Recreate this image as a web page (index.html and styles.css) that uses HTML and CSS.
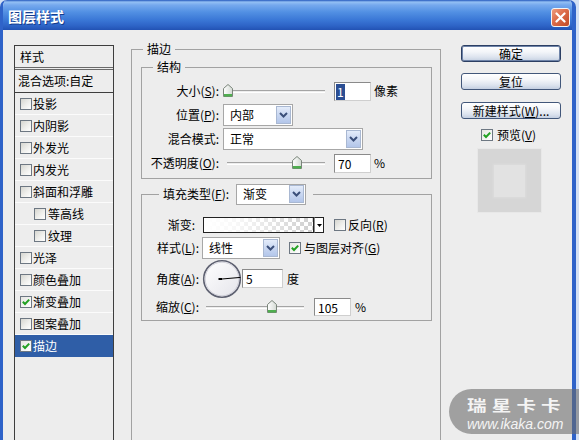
FILE: index.html
```html
<!DOCTYPE html>
<html lang="zh-CN">
<head>
<meta charset="utf-8">
<title>图层样式</title>
<link rel="stylesheet" href="styles.css">
</head>
<body>
<div class="window">
  <div class="titlebar">
    <span class="title">图层样式</span>
    <span class="close"><svg width="11" height="11" viewBox="0 0 11 11"><path d="M1.5 1.5 L9.5 9.5 M9.5 1.5 L1.5 9.5" stroke="#fff" stroke-width="2.2" stroke-linecap="round"/></svg></span>
  </div>
  <div class="client">
    <ul class="stylelist">
      <li class="head">样式</li>
      <li class="blend">混合选项:自定</li>
      <li><span class="cb"></span>投影</li>
      <li><span class="cb"></span>内阴影</li>
      <li><span class="cb"></span>外发光</li>
      <li><span class="cb"></span>内发光</li>
      <li><span class="cb"></span>斜面和浮雕</li>
      <li class="sub"><span class="cb"></span>等高线</li>
      <li class="sub"><span class="cb"></span>纹理</li>
      <li><span class="cb"></span>光泽</li>
      <li><span class="cb"></span>颜色叠加</li>
      <li><span class="cb on"><svg width="10" height="10" viewBox="0 0 10 10"><path d="M1.8 4.8 L4 7 L8.2 2.6" fill="none" stroke="#22a122" stroke-width="2"/></svg></span>渐变叠加</li>
      <li><span class="cb"></span>图案叠加</li>
      <li class="sel"><span class="cb on"><svg width="10" height="10" viewBox="0 0 10 10"><path d="M1.8 4.8 L4 7 L8.2 2.6" fill="none" stroke="#22a122" stroke-width="2"/></svg></span>描边</li>
    </ul>

    <fieldset class="outer">
      <legend>描边</legend>
      <fieldset class="group struct">
        <legend>结构</legend>
        <div class="row first">
          <span class="lbl">大小(<u>S</u>):</span>
          <span class="slider s-size"><span class="thumb" style="left:0px"><svg width="10" height="13" viewBox="0 0 10 13"><defs><linearGradient id="tg1" x1="0" y1="0" x2="1" y2="0"><stop offset="0" stop-color="#ffffff"/><stop offset="1" stop-color="#d4dad4"/></linearGradient></defs><path d="M5 0.5 L9.5 4.5 V12.5 H0.5 V4.5 Z" fill="url(#tg1)" stroke="#7a857a"/><rect x="1" y="10" width="8" height="2.5" fill="#4fae4f"/></svg></span></span>
          <span class="num"><span class="hl">1</span></span>
          <span class="unit">像素</span>
        </div>
        <div class="row">
          <span class="lbl">位置(<u>P</u>):</span>
          <span class="select w-pos">内部<span class="arr"><svg width="9" height="6" viewBox="0 0 9 6"><path d="M1 1 L4.5 4.5 L8 1" fill="none" stroke="#3b4f7a" stroke-width="2"/></svg></span></span>
        </div>
        <div class="row">
          <span class="lbl">混合模式:</span>
          <span class="select w-mode">正常<span class="arr"><svg width="9" height="6" viewBox="0 0 9 6"><path d="M1 1 L4.5 4.5 L8 1" fill="none" stroke="#3b4f7a" stroke-width="2"/></svg></span></span>
        </div>
        <div class="row">
          <span class="lbl">不透明度(<u>O</u>):</span>
          <span class="slider s-op"><span class="thumb" style="left:65px"><svg width="10" height="13" viewBox="0 0 10 13"><defs><linearGradient id="tg2" x1="0" y1="0" x2="1" y2="0"><stop offset="0" stop-color="#ffffff"/><stop offset="1" stop-color="#d4dad4"/></linearGradient></defs><path d="M5 0.5 L9.5 4.5 V12.5 H0.5 V4.5 Z" fill="url(#tg2)" stroke="#7a857a"/><rect x="1" y="10" width="8" height="2.5" fill="#4fae4f"/></svg></span></span>
          <span class="num">70</span>
          <span class="unit">%</span>
        </div>
      </fieldset>

      <fieldset class="group fill">
        <legend><span class="leglbl">填充类型(<u>F</u>):</span><span class="select w-fill">渐变<span class="arr"><svg width="9" height="6" viewBox="0 0 9 6"><path d="M1 1 L4.5 4.5 L8 1" fill="none" stroke="#3b4f7a" stroke-width="2"/></svg></span></span></legend>
        <div class="row r-grad">
          <span class="lbl2 lbl-grad">渐变:</span>
          <span class="gradbox"></span><span class="gradarr"><svg width="5" height="3" viewBox="0 0 5 3"><path d="M0 0 H5 L2.5 3 Z" fill="#000"/></svg></span>
          <span class="cb cb-rev"></span><span class="cbtext">反向(<u>R</u>)</span>
        </div>
        <div class="row r-style">
          <span class="lbl2">样式(<u>L</u>):</span>
          <span class="select w-style">线性<span class="arr"><svg width="9" height="6" viewBox="0 0 9 6"><path d="M1 1 L4.5 4.5 L8 1" fill="none" stroke="#3b4f7a" stroke-width="2"/></svg></span></span>
          <span class="cb on cb-align"><svg width="10" height="10" viewBox="0 0 10 10"><path d="M1.8 4.8 L4 7 L8.2 2.6" fill="none" stroke="#22a122" stroke-width="2"/></svg></span><span class="cbtext">与图层对齐(<u>G</u>)</span>
        </div>
        <div class="row r-angle">
          <span class="lbl2">角度(<u>A</u>):</span>
          <span class="dial"><svg width="40" height="40" viewBox="0 0 40 40"><defs><linearGradient id="dg" x1="0" y1="0" x2="1" y2="1"><stop offset="0" stop-color="#ffffff"/><stop offset="1" stop-color="#e4e4ea"/></linearGradient></defs><circle cx="20" cy="20" r="18.3" fill="url(#dg)" stroke="#5d6070" stroke-width="1.6"/><circle cx="20" cy="20" r="16.8" fill="none" stroke="#c8c8d2" stroke-width="0.8"/><line x1="20" y1="20" x2="38.5" y2="18.4" stroke="#000" stroke-width="1"/><rect x="16.5" y="19" width="3.5" height="2" fill="#000"/></svg></span>
          <span class="num n-angle">5</span>
          <span class="unit u-angle">度</span>
        </div>
        <div class="row r-scale">
          <span class="lbl2">缩放(<u>C</u>):</span>
          <span class="slider s-scale"><span class="thumb" style="left:61px"><svg width="10" height="13" viewBox="0 0 10 13"><defs><linearGradient id="tg3" x1="0" y1="0" x2="1" y2="0"><stop offset="0" stop-color="#ffffff"/><stop offset="1" stop-color="#d4dad4"/></linearGradient></defs><path d="M5 0.5 L9.5 4.5 V12.5 H0.5 V4.5 Z" fill="url(#tg3)" stroke="#7a857a"/><rect x="1" y="10" width="8" height="2.5" fill="#4fae4f"/></svg></span></span>
          <span class="num n-scale">105</span>
          <span class="unit u-scale">%</span>
        </div>
      </fieldset>
    </fieldset>

    <div class="side">
      <div class="btn default">确定</div>
      <div class="btn b-reset">复位</div>
      <div class="btn b-new">新建样式(<u>W</u>)...</div>
      <div class="prevcheck"><span class="cb on"><svg width="10" height="10" viewBox="0 0 10 10"><path d="M1.8 4.8 L4 7 L8.2 2.6" fill="none" stroke="#22a122" stroke-width="2"/></svg></span><span class="cbtext">预览(<u>V</u>)</span></div>
      <div class="preview"><div class="pinner"></div></div>
    </div>
  </div>
</div>
<div class="watermark">
  <span class="wm-cn">瑞星卡卡</span>
  <span class="wm-url">www.ikaka.com</span>
</div>
</body>
</html>
```
FILE: styles.css
```css
html, body {
  margin: 0;
  padding: 0;
}
body {
  width: 579px;
  height: 440px;
  overflow: hidden;
  position: relative;
  background: #d3e0f4;
  font: 12px/14px "Noto Sans CJK SC", "Liberation Sans", sans-serif;
  color: #000;
}
u {
  text-decoration: underline;
  text-underline-offset: 1px;
}
.window {
  width: 576px;
  height: 440px;
  box-sizing: border-box;
  border-left: 3px solid #2f63c9;
  border-right: 4px solid #2f63c9;
  border-radius: 7px 7px 0 0;
  overflow: hidden;
  background: #ededed;
}
.titlebar {
  height: 30px;
  display: flex;
  justify-content: space-between;
  align-items: flex-start;
  background: linear-gradient(to bottom, #2458bd 0, #94c0f4 2px, #76a9ee 5px, #5290e3 12px, #3a77d6 20px, #2d63c6 26px, #2252b4 30px);
}
.title {
  padding: 9px 0 0 5px;
  font-size: 14px;
  line-height: 14px;
  font-weight: bold;
  color: #fff;
  text-shadow: 1px 1px 0 #143c8c;
}
.close {
  margin: 8px 2px 0 0;
  width: 19px;
  height: 19px;
  box-sizing: border-box;
  border: 1px solid #f5f5f5;
  border-radius: 3px;
  background: linear-gradient(135deg, #ee9d80 0%, #dc6b48 45%, #c24a26 100%);
  display: flex;
  align-items: center;
  justify-content: center;
}
.client {
  display: flex;
  align-items: flex-start;
  height: 410px;
  overflow: hidden;
  background: #ededed;
}

/* left style list */
.stylelist {
  list-style: none;
  margin: 15px 0 0 11px;
  padding: 0;
  width: 100px;
  height: 430px;
  box-sizing: border-box;
  border: 1px solid #3e3e3e;
  flex: none;
}
.stylelist li {
  display: flex;
  align-items: center;
  height: 21px;
  border-bottom: 1px solid #fbfbfb;
  padding-left: 5px;
  white-space: nowrap;
}
.stylelist li.head {
  border-bottom: 3px double #6a6a6a;
}
.stylelist li.blend {
  height: 22px;
  padding-left: 3px;
  border-bottom: 1px solid #3e3e3e;
}
.stylelist li.sub {
  padding-left: 19px;
}
.stylelist li.sub .cb {
  margin-right: 2px;
}
.stylelist li.sel {
  background: #2f5ea7;
  color: #fff;
  border-bottom-color: #2f5ea7;
}
.cb {
  width: 12px;
  height: 12px;
  box-sizing: border-box;
  border: 1px solid #6d7782;
  background: linear-gradient(135deg, #d6d6d0 0%, #efefec 55%, #ffffff 100%);
  margin-right: 1px;
  flex: none;
  display: inline-flex;
  align-items: center;
  justify-content: center;
}
.cb.on {
  background: linear-gradient(135deg, #e6e6e2 0%, #ffffff 100%);
}

/* fieldsets */
fieldset {
  margin: 0;
  padding: 0;
  min-width: 0;
  border: 1px solid #a2a2a2;
}
legend {
  padding: 0 4px;
  line-height: 14px;
}
.outer {
  margin: 12px 0 0 17px;
  width: 310px;
  height: 430px;
  box-sizing: border-box;
  flex: none;
}
.outer > legend {
  margin-left: 11px;
}
.group {
  width: 291px;
  box-sizing: border-box;
  margin-left: 9px;
}
.group > legend {
  margin-left: 11px;
}
.struct {
  margin-top: 4px;
  padding: 6px 0 4px 0;
}
.row {
  display: flex;
  align-items: center;
  height: 22px;
  margin-top: 2px;
  white-space: nowrap;
}
.row.first {
  margin-top: 0;
}
.lbl {
  width: 77px;
  text-align: right;
  margin-right: 4px;
  flex: none;
}
.slider {
  position: relative;
  height: 14px;
  flex: none;
}
.slider::before {
  content: "";
  position: absolute;
  left: 0;
  right: 0;
  top: 6px;
  height: 1px;
  border-top: 1px solid #a4a4a4;
  border-bottom: 1px solid #ffffff;
}
.thumb {
  position: absolute;
  top: 0;
  width: 10px;
  height: 13px;
  display: block;
}
.thumb svg {
  display: block;
}
.s-size {
  width: 102px;
  margin-right: 9px;
}
.s-op {
  width: 98px;
  margin-left: 4px;
  margin-right: 9px;
}
.num {
  width: 37px;
  height: 19px;
  box-sizing: border-box;
  border: 1px solid;
  border-color: #8a8a8a #cfcfcf #cfcfcf #8a8a8a;
  background: #fff;
  padding-left: 3px;
  line-height: 17px;
  flex: none;
}
.hl {
  display: inline-block;
  background: #2b4e93;
  color: #fff;
  margin-left: -2px;
  padding: 0 1px;
  line-height: 16px;
}
.unit {
  margin-left: 3px;
}
.select {
  display: flex;
  align-items: center;
  justify-content: space-between;
  height: 22px;
  box-sizing: border-box;
  border: 1px solid #a7a7a7;
  background: #fff;
  padding-left: 6px;
  flex: none;
}
.arr {
  width: 15px;
  height: 18px;
  box-sizing: border-box;
  margin-right: 1px;
  border: 1px solid #f2f6fc;
  outline: 1px solid #a9b8d2;
  outline-offset: -1px;
  background: linear-gradient(to bottom, #e4ecfa 0%, #c9d7f1 50%, #b3c6ea 100%);
  display: flex;
  align-items: center;
  justify-content: center;
}
.w-pos { width: 70px; }
.w-mode { width: 140px; }
.w-fill { width: 70px; height: 21px; margin-left: 6px; }
.w-style { width: 78px; margin-right: 9px; }

/* fill fieldset */
.fill {
  margin-top: 8px;
  padding: 13px 0 4px 0;
}
.fill > legend {
  margin-left: 17px;
  padding: 0 7px 0 4px;
  display: flex;
  align-items: center;
  height: 14px;
  white-space: nowrap;
}
.leglbl {
  width: 67px;
  flex: none;
}
.fill .row.r-grad {
  margin-top: 0;
}
.lbl2 {
  width: 57px;
  text-align: right;
  margin-right: 3px;
  flex: none;
}
.lbl-grad {
  padding-right: 4px;
  box-sizing: border-box;
}
.gradbox {
  width: 111px;
  height: 16px;
  box-sizing: border-box;
  margin-left: 1px;
  border: 1px solid #222;
  flex: none;
  background:
    linear-gradient(to right, #ffffff 0%, rgba(255,255,255,0.85) 30%, rgba(255,255,255,0) 100%),
    repeating-conic-gradient(#cfcfcf 0 25%, #ffffff 0 50%) 0 0 / 8px 8px;
}
.gradarr {
  width: 10px;
  height: 16px;
  box-sizing: border-box;
  border: 1px solid #222;
  border-left: 1px solid #8a8a8a;
  background: #fff;
  display: flex;
  align-items: center;
  justify-content: center;
  margin-right: 10px;
  flex: none;
}
.cbtext {
  margin-left: 2px;
}
.cb-rev {
  margin-right: 0;
}
.fill .row.r-style {
  margin-top: 1px;
}
.fill .row.r-angle {
  margin-top: 0;
  height: 39px;
}
.dial {
  width: 40px;
  height: 40px;
  flex: none;
}
.dial svg {
  display: block;
}
.n-angle {
  width: 41px;
}
.u-angle {
  margin-left: 4px;
}
.fill .row.r-scale {
  margin-top: 0;
  height: 18px;
}
.s-scale {
  width: 98px;
  margin-left: 4px;
  margin-right: 10px;
}
.n-scale {
  height: 18px;
}
.u-scale {
  margin-left: 4px;
}

/* right column */
.side {
  margin: 15px 0 0 20px;
  width: 100px;
  flex: none;
  display: flex;
  flex-direction: column;
}
.btn {
  height: 17px;
  box-sizing: border-box;
  border: 1px solid #42577a;
  border-radius: 3px;
  background: linear-gradient(to bottom, #ffffff 0%, #f3f5f9 40%, #dce3ee 75%, #c4cfe1 100%);
  text-align: center;
  line-height: 15px;
  white-space: nowrap;
}
.btn.default {
  border-color: #2c3f63;
  box-shadow: inset 0 0 0 1px #6e83a8;
}
.b-reset {
  margin-top: 11px;
}
.b-new {
  margin-top: 12px;
}
.prevcheck {
  display: flex;
  align-items: center;
  margin-top: 9px;
  padding-left: 20px;
  height: 13px;
}
.prevcheck .cbtext {
  margin-left: 3px;
}
.preview {
  margin: 7px 0 0 16px;
  width: 65px;
  height: 65px;
  box-sizing: border-box;
  border: 1px solid #e8e8e8;
  background: #d6d6d6;
  display: flex;
  align-items: center;
  justify-content: center;
}
.pinner {
  width: 31px;
  height: 32px;
  background: #e2e2e2;
  box-shadow: 0 0 2px 1px #dcdcdc;
}

/* watermark overlay */
.watermark {
  position: absolute;
  left: 449px;
  top: 389px;
  width: 130px;
  height: 45px;
  border-radius: 23px 0 0 23px;
  background: rgba(105, 105, 105, 0.58);
  display: flex;
  flex-direction: column;
  align-items: flex-start;
  padding-left: 18px;
  box-sizing: border-box;
  overflow: hidden;
  color: #f4f4f4;
}
.wm-cn {
  display: block;
  margin-top: 8px;
  height: 15px;
  font: bold 15px/15px "Noto Sans CJK SC", sans-serif;
  letter-spacing: 4px;
  margin-right: -4px;
  transform: scaleX(1.3);
  transform-origin: 0 0;
  white-space: nowrap;
}
.wm-url {
  display: block;
  margin-top: 5px;
  font: italic 14px/14px "Liberation Sans", sans-serif;
  white-space: nowrap;
}
```
